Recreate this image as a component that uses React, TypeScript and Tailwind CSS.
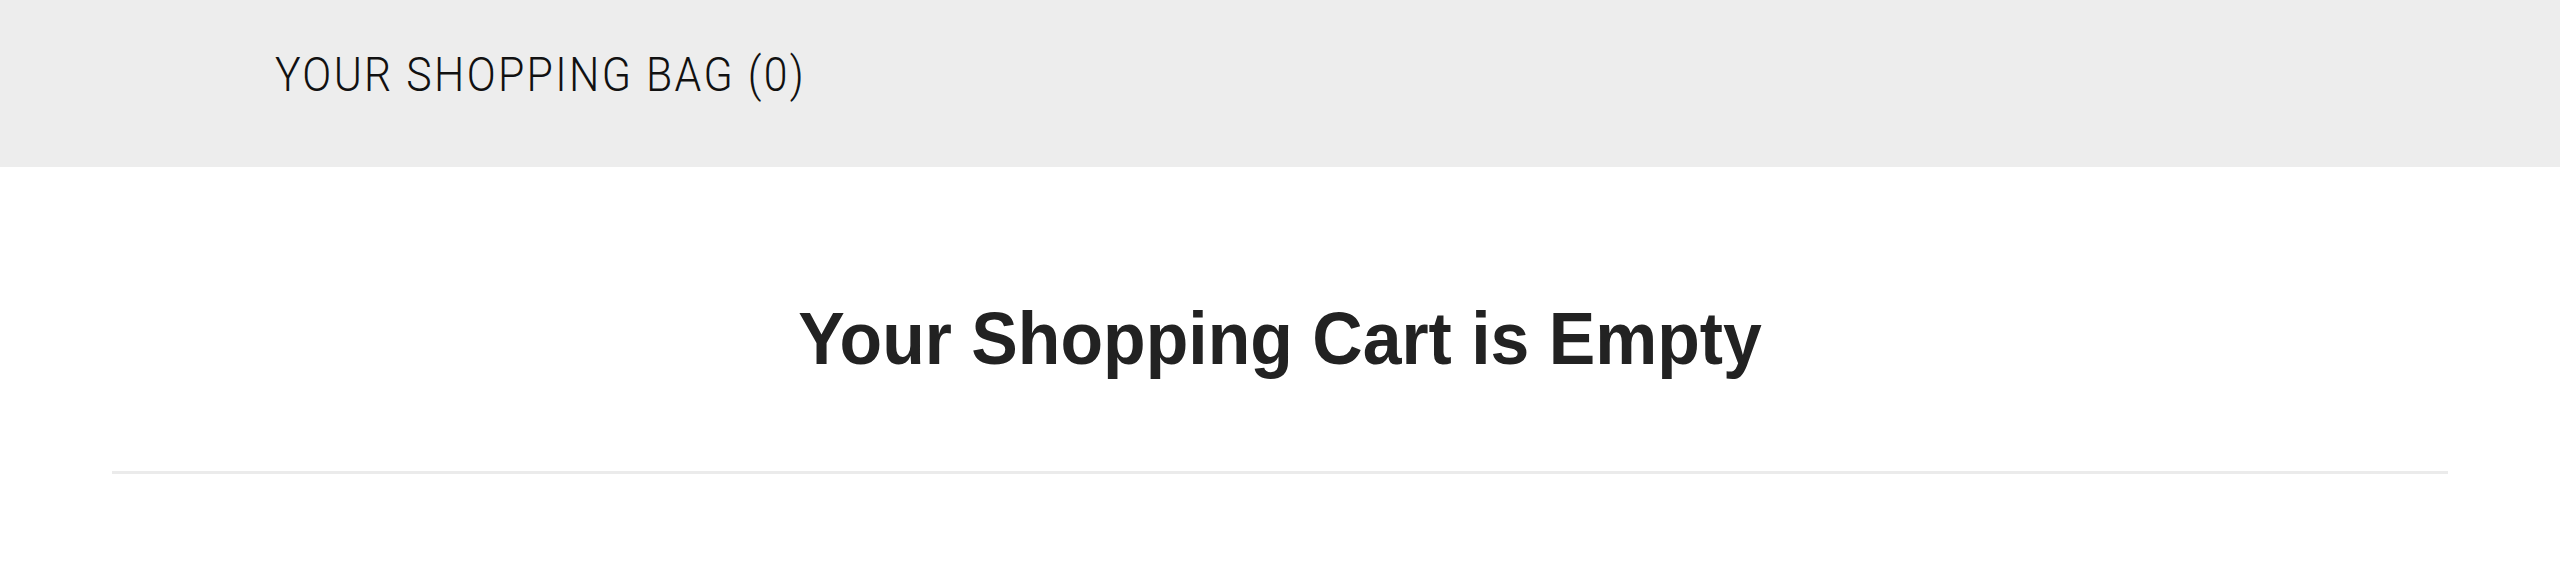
export default function App() {
    return (
        <div className="min-h-[570px] w-full bg-white">
            {/* Top band */}
            <div className="h-[167px] bg-[#ededed] pl-[275px] pt-[52px]">
                <h1 className="inline-block origin-left scale-x-[0.9] font-['Roboto','Liberation_Sans',sans-serif] text-[47.5px] font-light leading-none tracking-[2.6px] text-[#111]">
                    YOUR SHOPPING BAG (0)
                </h1>
            </div>

            {/* Empty state */}
            <div className="mx-[112px]">
                <div className="flex justify-center pt-[134px]">
                    <h2 className="inline-block scale-x-[0.93] font-['Liberation_Sans',Arial,sans-serif] text-[75px] font-bold leading-none text-[#222]">
                        Your Shopping Cart is Empty
                    </h2>
                </div>
                <div className="mt-[95px] h-[3px] bg-[#ebebeb]" />
            </div>
        </div>
    );
}
